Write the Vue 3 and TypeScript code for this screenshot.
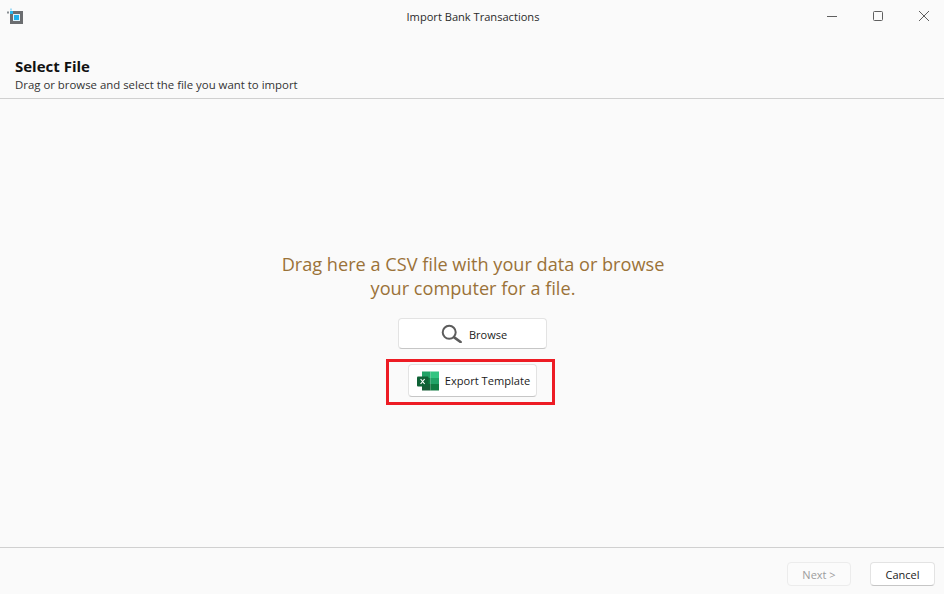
<script setup lang="ts">
const title = 'Import Bank Transactions'
</script>

<template>
  <div class="window">
    <header class="titlebar">
      <svg class="app-icon" width="17" height="17" viewBox="0 0 17 17">
        <rect x="0" y="3.5" width="2" height="2" fill="#8a8f94" />
        <rect x="3" y="0.5" width="2" height="2" fill="#a5dcf6" />
        <rect x="4.5" y="4.5" width="10" height="10" fill="#dff2fb" stroke="#6b6d70" stroke-width="3" />
        <rect x="3" y="3" width="3" height="3" fill="#29b6ee" />
        <rect x="7" y="7" width="5" height="5" fill="#1fb0ec" />
      </svg>
      <span class="title">{{ title }}</span>
      <div class="controls">
        <svg width="12" height="12" viewBox="0 0 12 12"><path d="M1 6.5H11" stroke="#5f5f5f" stroke-width="1" /></svg>
        <svg width="12" height="12" viewBox="0 0 12 12"><rect x="1.5" y="1.5" width="9" height="9" rx="1" fill="none" stroke="#5f5f5f" /></svg>
        <svg width="12" height="12" viewBox="0 0 12 12"><path d="M1 1L11 11M11 1L1 11" stroke="#5f5f5f" stroke-width="1" /></svg>
      </div>
    </header>

    <section class="heading">
      <h1>Select File</h1>
      <p>Drag or browse and select the file you want to import</p>
    </section>

    <main class="body">
      <p class="message">Drag here a CSV file with your data or browse<br />your computer for a file.</p>
      <button class="btn browse" type="button">
        <svg width="21" height="19" viewBox="0 0 21 19">
          <circle cx="8.2" cy="8.3" r="6.5" fill="none" stroke="#5c5c5c" stroke-width="2" />
          <path d="M13.2 13.4L19.6 18" stroke="#5c5c5c" stroke-width="2.6" stroke-linecap="round" />
        </svg>
        <span>Browse</span>
      </button>
      <div class="highlight">
        <button class="btn export" type="button">
          <svg width="22" height="20" viewBox="0 0 22 20">
            <rect x="5" y="0.5" width="8.5" height="6.5" fill="#21a366" />
            <rect x="13.5" y="0.5" width="8.5" height="6.5" fill="#33c481" />
            <rect x="5" y="7" width="8.5" height="6" fill="#107c41" />
            <rect x="13.5" y="7" width="8.5" height="6" fill="#21a366" />
            <rect x="5" y="13" width="8.5" height="6.5" fill="#185c37" />
            <rect x="13.5" y="13" width="8.5" height="6.5" fill="#107c41" />
            <rect x="0" y="5.5" width="11.5" height="10" rx="1" fill="#0f6236" />
            <path d="M3.6 8L7.6 13M7.6 8L3.6 13" stroke="#fff" stroke-width="1.2" />
          </svg>
          <span>Export Template</span>
        </button>
      </div>
    </main>

    <footer class="footer">
      <button class="btn next" type="button" disabled>Next &gt;</button>
      <button class="btn cancel" type="button">Cancel</button>
    </footer>
  </div>
</template>

<style>
html, body { margin: 0; background: #fafafa; }
</style>

<style scoped>
.window {
  width: 944px;
  height: 594px;
  background: #fafafa;
  display: flex;
  flex-direction: column;
  font-family: "Open Sans", "Noto Sans", sans-serif;
  color: #1b1b1b;
  overflow: hidden;
}
.titlebar {
  height: 34px;
  flex: none;
  display: flex;
  align-items: flex-start;
  position: relative;
  padding: 8px 0 0 7px;
  box-sizing: border-box;
}
.title {
  position: absolute;
  left: 2px;
  right: 0;
  top: 8px;
  text-align: center;
  font-size: 11.1px;
  line-height: 18px;
  color: #2a2a2a;
}
.controls {
  position: absolute;
  right: 14px;
  top: 10px;
  display: flex;
  gap: 34px;
}
.heading {
  height: 65px;
  flex: none;
  box-sizing: border-box;
  padding: 23px 15px 0;
  border-bottom: 1px solid #d0d0d0;
}
.heading h1 {
  margin: 0;
  font-size: 15px;
  line-height: 19px;
  font-weight: 700;
  color: #111;
}
.heading p {
  margin: 0;
  font-size: 11.4px;
  line-height: 18px;
  color: #333;
}
.body {
  flex: 1;
  display: flex;
  flex-direction: column;
  align-items: center;
  padding-top: 153px;
  box-sizing: border-box;
}
.message {
  margin: 0 0 18px 2px;
  text-align: center;
  font-size: 18.15px;
  line-height: 24px;
  color: #9a7238;
}
.btn {
  font-family: inherit;
  background: #fff;
  border: 1px solid #e3e3e3;
  border-bottom-color: #c6c6c6;
  border-radius: 4px;
  color: #1b1b1b;
  font-size: 11px;
  display: flex;
  align-items: center;
  justify-content: center;
  padding: 0;
  box-sizing: border-box;
}
.browse {
  width: 149px;
  height: 31px;
  gap: 7px;
  padding-left: 3px;
  margin-left: 1px;
}
.browse span {
  margin-top: 2px;
}
.highlight {
  margin-top: 10px;
  margin-right: 3px;
  width: 169px;
  height: 46px;
  box-sizing: border-box;
  border: 3px solid #ed1c24;
  display: flex;
  align-items: center;
  justify-content: center;
}
.export {
  width: 129px;
  height: 33px;
  gap: 6px;
  padding-left: 2px;
  margin: -3px 0 0 4px;
  font-size: 11.1px;
}
.footer {
  height: 47px;
  flex: none;
  box-sizing: border-box;
  border-top: 1px solid #d0d0d0;
  display: flex;
  justify-content: flex-end;
  align-items: flex-start;
  gap: 19px;
  padding: 14px 9px 0 0;
}
.next {
  width: 64px;
  height: 24px;
}
.cancel {
  width: 65px;
  height: 24px;
}
.next:disabled {
  background: #fbfbfb;
  border-color: #ececec;
  color: #9d9d9d;
}
</style>
